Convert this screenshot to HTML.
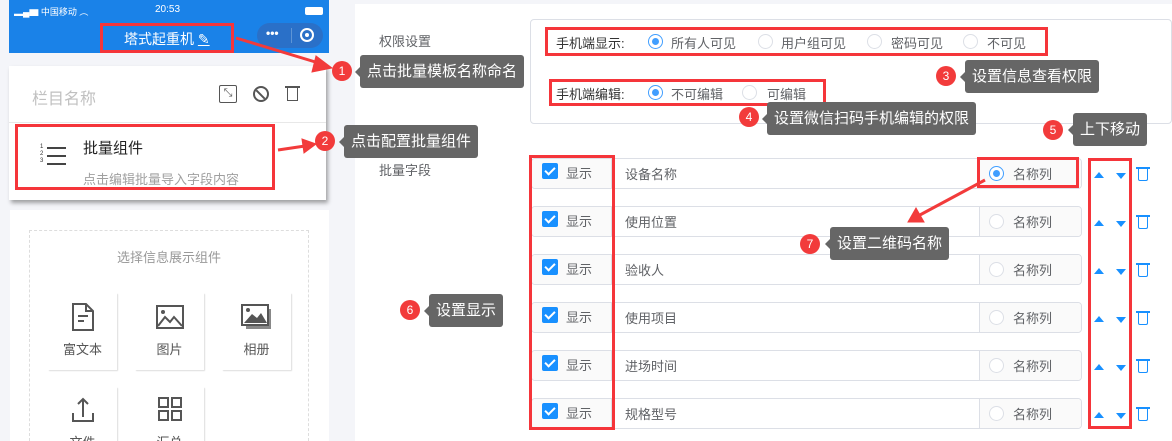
<!DOCTYPE html>
<html><head><meta charset="utf-8"><style>
*{margin:0;padding:0;box-sizing:border-box}
html,body{width:1172px;height:441px;overflow:hidden}
body{background:#f4f5f9;font-family:"Liberation Sans","Noto Sans CJK SC",sans-serif;font-size:13px;color:#606266}
#wrap{position:relative;width:1172px;height:441px;overflow:hidden}
.a{position:absolute}
.rb{position:absolute;border:3px solid #f5353a}
.badge{position:absolute;width:20px;height:20px;border-radius:50%;background:#f23b3b;color:#fff;font-size:12px;line-height:20px;text-align:center}
.tip{position:absolute;background:#666;color:#fff;font-size:15px;border-radius:3px;padding:0 7px;height:33px;line-height:33px;white-space:nowrap}
.tip:before{content:"";position:absolute;left:-5px;top:12px;border:5px solid transparent;border-left:0;border-right-color:#666}
.radio{position:absolute;width:15px;height:15px;border-radius:50%;border:1px solid #dcdfe6;background:#fff}
.radio.on{border-color:#409eff}
.radio.on:after{content:"";position:absolute;left:3px;top:3px;width:7px;height:7px;border-radius:50%;background:#409eff}
.cb{position:absolute;width:16px;height:16px;background:#1890ff;border-radius:2px}
.cb:after{content:"";position:absolute;left:5px;top:2px;width:4px;height:8px;border:solid #fff;border-width:0 2px 2px 0;transform:rotate(45deg)}
.tile{position:absolute;width:69px;height:77px;background:#fff;box-shadow:1px 1px 1px #ddd;text-align:center;font-size:13px;color:#555;overflow:hidden}
</style></head><body><div id="wrap">
<div class="a" style="left:9px;top:0;width:320px;height:53px;background:#1a82e8"></div>
<div class="a" style="left:14px;top:5px;color:#fff;font-size:9px">▂▄▆ 中国移动 ︵</div>
<div class="a" style="left:155px;top:4px;color:#fff;font-size:10px">20:53</div>
<div class="a" style="left:305px;top:7px;width:18px;height:8px;background:#fff;border-radius:2px"></div>
<div class="a" style="left:124px;top:29px;color:#fff;font-size:14px">塔式起重机 <span style="text-decoration:underline">✎</span></div>
<div class="rb" style="left:100px;top:23px;width:134px;height:30px"></div>
<div class="a" style="left:257px;top:23px;width:66px;height:25px;border-radius:13px;background:#2a70c8"></div>
<div class="a" style="left:266px;top:26px;color:#fff;font-size:12px;font-weight:bold">•••</div>
<div class="a" style="left:291px;top:28px;width:1px;height:15px;background:#5e95d6"></div>
<div class="a" style="left:300px;top:28px;width:14px;height:14px;border:2px solid #fff;border-radius:50%"></div>
<div class="a" style="left:305px;top:33px;width:4px;height:4px;background:#fff;border-radius:50%"></div>
<div class="a" style="left:9px;top:66px;width:317px;height:134px;background:#fff;box-shadow:2px 3px 4px rgba(0,0,0,.35)"></div>
<div class="a" style="left:32px;top:85px;font-size:16px;color:#c0c0c0">栏目名称</div>
<div class="a" style="left:219px;top:85px;width:18px;height:18px;border:1.5px solid #555;border-radius:2px;font-size:11px;line-height:15px;text-align:center;color:#555">⤡</div>
<div class="a" style="left:253px;top:86px;width:16px;height:16px;border:2px solid #555;border-radius:50%;overflow:hidden"><div style="position:absolute;left:5px;top:-3px;width:2px;height:20px;background:#555;transform:rotate(-45deg)"></div></div>
<div class="a" style="left:287px;top:88px;width:11px;height:13px;border:1.5px solid #555;border-top:none"></div>
<div class="a" style="left:285px;top:86px;width:15px;height:2px;background:#555"></div>
<div class="a" style="left:9px;top:122px;width:317px;height:1px;background:#e8e8e8"></div>
<div class="a" style="left:40px;top:144px;font-size:6px;line-height:7px;color:#333">1<br>2<br>3</div>
<div class="a" style="left:47px;top:147px;width:19px;height:2px;background:#444;box-shadow:0 8px 0 #444,0 16px 0 #444"></div>
<div class="a" style="left:83px;top:137px;font-size:15px;color:#222">批量组件</div>
<div class="a" style="left:83px;top:169px;font-size:13px;color:#a0a0a0">点击编辑批量导入字段内容</div>
<div class="rb" style="left:15px;top:124px;width:260px;height:66px"></div>
<div class="a" style="left:10px;top:210px;width:319px;height:231px;background:#fff"></div>
<div class="a" style="left:29px;top:230px;width:280px;height:211px;border:1px dashed #ddd;border-bottom:none"></div>
<div class="a" style="left:29px;top:247px;width:280px;text-align:center;color:#999;font-size:13px">选择信息展示组件</div>
<div class="tile" style="left:48px;top:293px"><svg width="28" height="30" style="margin-top:9px" viewBox="0 0 28 30"><path d="M4 2h13l7 7v19H4z M17 2v7h7 M9 14h10 M9 19h6" fill="none" stroke="#555" stroke-width="2"/></svg><div style="margin-top:4px">富文本</div></div>
<div class="tile" style="left:135px;top:293px"><svg width="30" height="30" style="margin-top:9px" viewBox="0 0 30 30"><rect x="2" y="4" width="26" height="22" fill="none" stroke="#555" stroke-width="2"/><circle cx="8" cy="10" r="2" fill="#555"/><path d="M3 24l7-9 5 5 4-5 8 9" fill="none" stroke="#555" stroke-width="2"/></svg><div style="margin-top:4px">图片</div></div>
<div class="tile" style="left:222px;top:293px"><svg width="32" height="30" style="margin-top:9px" viewBox="0 0 32 30"><rect x="5" y="7" width="25" height="20" fill="#888"/><rect x="1" y="3" width="26" height="20" fill="#fff" stroke="#555" stroke-width="2"/><path d="M3 21l8-9 5 4 4-5 6 10z" fill="#555"/><circle cx="7" cy="8" r="2" fill="#555"/></svg><div style="margin-top:4px">相册</div></div>
<div class="tile" style="left:48px;top:387px;height:54px"><svg width="28" height="30" style="margin-top:8px" viewBox="0 0 28 30"><path d="M14 22V4 M9 9l5-5 5 5 M4 18v8h20v-8" fill="none" stroke="#555" stroke-width="2"/></svg><div style="margin-top:4px">文件</div></div>
<div class="tile" style="left:135px;top:387px;height:54px"><svg width="28" height="30" style="margin-top:8px" viewBox="0 0 28 30"><g fill="none" stroke="#555" stroke-width="2"><rect x="3" y="3" width="9" height="9"/><rect x="16" y="3" width="9" height="9"/><rect x="3" y="16" width="9" height="9"/><rect x="16" y="16" width="9" height="9"/></g></svg><div style="margin-top:4px">汇总</div></div>
<div class="a" style="left:355px;top:4px;width:817px;height:437px;background:#fff"></div>
<div class="a" style="left:379px;top:31px;color:#606266">权限设置</div>
<div class="a" style="left:530px;top:19px;width:642px;height:105px;border:1px solid #dcdfe6;border-radius:4px"></div>
<div class="a" style="left:556px;top:33px;color:#333">手机端显示:</div>
<div class="radio on" style="left:648px;top:34px"></div><div class="a" style="left:671px;top:33px">所有人可见</div>
<div class="radio" style="left:758px;top:34px"></div><div class="a" style="left:781px;top:33px">用户组可见</div>
<div class="radio" style="left:867px;top:34px"></div><div class="a" style="left:891px;top:33px">密码可见</div>
<div class="radio" style="left:963px;top:34px"></div><div class="a" style="left:987px;top:33px">不可见</div>
<div class="rb" style="left:545px;top:27px;width:503px;height:29px"></div>
<div class="a" style="left:556px;top:84px;color:#333">手机端编辑:</div>
<div class="radio on" style="left:648px;top:85px"></div><div class="a" style="left:671px;top:84px">不可编辑</div>
<div class="radio" style="left:742px;top:85px"></div><div class="a" style="left:767px;top:84px">可编辑</div>
<div class="rb" style="left:549px;top:79px;width:277px;height:27px"></div>
<div class="a" style="left:379px;top:160px">批量字段</div>
<div id="rows"></div>
<script>
var names=["设备名称","使用位置","验收人","使用项目","进场时间","规格型号"],h="";
names.forEach(function(n,i){var t=158+i*48;
h+='<div class="a" style="left:531px;top:'+t+'px;width:551px;height:31px;border:1px solid #dcdfe6;border-radius:4px;overflow:hidden"><div class="a" style="left:0;top:0;width:80px;height:31px;background:#fafafa;border-right:1px solid #dcdfe6"></div><div class="a" style="left:447px;top:0;width:104px;height:31px;background:#fafafa;border-left:1px solid #dcdfe6"></div></div>';
h+='<div class="cb" style="left:542px;top:'+(t+5)+'px"></div><div class="a" style="left:566px;top:'+(t+5)+'px">显示</div>';
h+='<div class="a" style="left:625px;top:'+(t+6)+'px">'+n+'</div>';
h+='<div class="radio'+(i==0?' on':'')+'" style="left:989px;top:'+(t+8)+'px"></div><div class="a" style="left:1013px;top:'+(t+6)+'px">名称列</div>';
h+='<div class="a" style="left:1094px;top:'+(t+14)+'px;border:5px solid transparent;border-top:0;border-bottom:6px solid #1890ff"></div>';
h+='<div class="a" style="left:1116px;top:'+(t+15)+'px;border:5px solid transparent;border-bottom:0;border-top:6px solid #1890ff"></div>';
h+='<div class="a" style="left:1138px;top:'+(t+11)+'px;width:10px;height:12px;border:1.5px solid #1890ff;border-top:none;border-radius:0 0 2px 2px"></div><div class="a" style="left:1136px;top:'+(t+9)+'px;width:14px;height:2px;background:#1890ff"></div>';
});
document.getElementById('rows').innerHTML=h;
</script>
<div class="rb" style="left:529px;top:155px;width:86px;height:275px"></div>
<div class="rb" style="left:1088px;top:158px;width:44px;height:271px"></div>
<div class="rb" style="left:977px;top:157px;width:102px;height:31px"></div>
<svg class="a" style="left:0;top:0" width="1172" height="441"><g fill="#f23b3b" stroke="#f23b3b">
<line x1="236" y1="38" x2="322" y2="64" stroke-width="3"/><polygon points="332,68 316,56 312,72"/>
<line x1="278" y1="150" x2="305" y2="146" stroke-width="3"/><polygon points="316,144 302,139 304,153"/>
<line x1="985" y1="180" x2="918" y2="216" stroke-width="3"/><polygon points="908,222 924,222 916,208"/>
</g></svg>
<div class="badge" style="left:332px;top:61px">1</div><div class="tip" style="left:360px;top:55px">点击批量模板名称命名</div>
<div class="badge" style="left:315px;top:131px">2</div><div class="tip" style="left:344px;top:125px">点击配置批量组件</div>
<div class="badge" style="left:936px;top:66px">3</div><div class="tip" style="left:965px;top:60px">设置信息查看权限</div>
<div class="badge" style="left:739px;top:107px">4</div><div class="tip" style="left:767px;top:102px">设置微信扫码手机编辑的权限</div>
<div class="badge" style="left:1043px;top:120px">5</div><div class="tip" style="left:1073px;top:113px">上下移动</div>
<div class="badge" style="left:400px;top:300px">6</div><div class="tip" style="left:429px;top:294px">设置显示</div>
<div class="badge" style="left:800px;top:234px">7</div><div class="tip" style="left:830px;top:227px">设置二维码名称</div>
</div></body></html>
